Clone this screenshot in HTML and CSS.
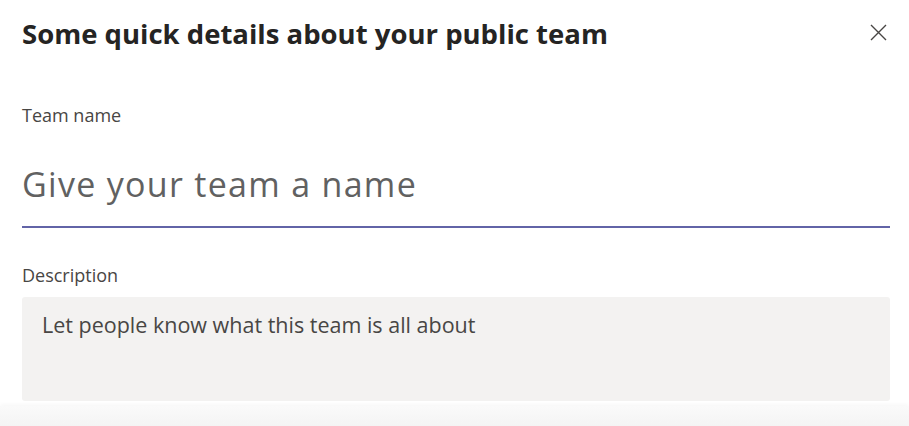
FILE: index.html
```html
<!DOCTYPE html>
<html lang="en">
<head>
  <meta charset="UTF-8">
  <meta name="viewport" content="width=device-width, initial-scale=1.0">
  <title>Create team</title>
  <link rel="stylesheet" href="styles.css">
</head>
<body>

<div class="dialog">
  <div class="dialog-header">
    <h1 class="dialog-title">Some quick details about your public team</h1>
    <button class="close-btn" aria-label="Close">
      <svg width="17" height="17" viewBox="0 0 17 17">
        <path d="M1 1 L16 16 M16 1 L1 16" stroke="#484644" stroke-width="1.4" fill="none"/>
      </svg>
    </button>
  </div>

  <form class="team-form">
    <label for="teamName" class="field-label">Team name</label>
    <input type="text" id="teamName" class="name-input" placeholder="Give your team a name">

    <label for="teamDesc" class="field-label desc-label">Description</label>
    <textarea id="teamDesc" class="desc-input" placeholder="Let people know what this team is all about"></textarea>
  </form>
</div>

<div class="dialog-footer"></div>

</body>
</html>
```

FILE: styles.css
```css
body {
  font-family: "Open Sans", "Noto Sans", sans-serif;
  margin: 0;
  background: #fff;
  height: 426px;
  overflow: hidden;
  display: flex;
  flex-direction: column;
}

.dialog {
  padding: 16px 19px 0 22px;
  flex: 1;
}

.dialog-header {
  display: flex;
  justify-content: space-between;
  align-items: flex-start;
}

.dialog-title {
  margin: 0;
  font-size: 27.5px;
  line-height: 36px;
  font-weight: 700;
  color: #252423;
}

.close-btn {
  border: none;
  background: none;
  padding: 0;
  margin: 8px 3px 0 0;
  width: 17px;
  height: 17px;
  cursor: pointer;
}

.close-btn svg {
  display: block;
}

.team-form {
  display: flex;
  flex-direction: column;
}

.field-label {
  margin-top: 51px;
  font-size: 18px;
  line-height: 24px;
  color: #484644;
}

.name-input {
  margin-top: 35px;
  border: none;
  border-bottom: 2px solid #6264a7;
  outline: none;
  padding: 0 0 20px 0;
  height: 44px;
  font-family: inherit;
  font-size: 34px;
  letter-spacing: 1.3px;
  line-height: 44px;
  color: #252423;
  background: transparent;
}

.name-input::placeholder {
  color: #616161;
  opacity: 1;
}

.desc-label {
  margin-top: 35px;
}

.desc-input {
  margin-top: 10px;
  height: 104px;
  box-sizing: border-box;
  border: none;
  border-radius: 3px;
  outline: none;
  resize: none;
  background: #f3f2f1;
  padding: 14px 20px;
  font-family: inherit;
  font-size: 21.5px;
  line-height: 28px;
  color: #252423;
}

.desc-input::placeholder {
  color: #484644;
  opacity: 1;
}

.dialog-footer {
  height: 20px;
  background: linear-gradient(#fafafa, #f4f4f4);
  box-shadow: 0 -2px 4px rgba(0, 0, 0, 0.03);
}
```
